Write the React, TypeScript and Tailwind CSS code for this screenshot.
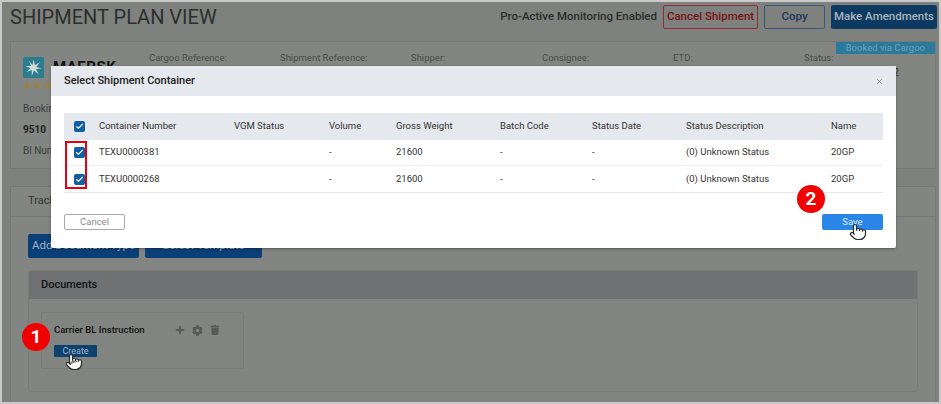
import type { FC } from 'react';
import { FaCog, FaPlus, FaTrash } from 'react-icons/fa';
import { Check, Pointer, X } from 'lucide-react';

const infoColumns = ['Cargoo Reference:', 'Shipment Reference:', 'Shipper:', 'Consignee:', 'ETD:', 'Status:'];

const tableColumns = [
  { label: 'Container Number', width: 'w-[135px]' },
  { label: 'VGM Status', width: 'w-[95px]' },
  { label: 'Volume', width: 'w-[67px]' },
  { label: 'Gross Weight', width: 'w-[104px]' },
  { label: 'Batch Code', width: 'w-[92px]' },
  { label: 'Status Date', width: 'w-[94px]' },
  { label: 'Status Description', width: 'w-[145px]' },
  { label: 'Name', width: 'w-[52px]' },
];

const rows = [
  ['TEXU0000381', '', '-', '21600', '-', '-', '(0) Unknown Status', '20GP'],
  ['TEXU0000268', '', '-', '21600', '-', '-', '(0) Unknown Status', '20GP'],
];

const CheckBox: FC = () => (
  <span className="flex h-[11px] w-[11px] items-center justify-center rounded-[2px] bg-[#0f5ea8]">
    <Check className="h-[9px] w-[9px] text-white" strokeWidth={3} />
  </span>
);

const StepBadge: FC<{ n: number; className: string }> = ({ n, className }) => (
  <div
    className={`absolute flex h-[28px] w-[28px] items-center justify-center rounded-full bg-[#f20000] text-[19px] font-bold text-white ${className}`}
  >
    {n}
  </div>
);

const Hand: FC<{ className: string }> = ({ className }) => (
  <Pointer className={`absolute h-[18px] w-[18px] fill-white text-[#2b2b2b] ${className}`} strokeWidth={1.6} />
);

const MaerskLogo: FC = () => (
  <svg viewBox="0 0 21 21" className="h-[21px] w-[21px] shrink-0">
    <rect width="21" height="21" rx="1.5" fill="#2b7d8e" />
    <polygon
      fill="#d4dcdc"
      points="10.5,2.5 11.9,8.2 16.9,5.3 13.2,9.9 18.8,11.3 13,12.1 15.6,17.3 10.9,13.4 8.8,18.9 8.8,13 3.4,15 7.5,11.2 2.3,9 8.1,9.1 6,3.7 9.6,8.2"
    />
  </svg>
);

export default function App() {
  return (
    <div className="relative h-[404px] w-[941px] overflow-hidden border-x-2 border-y-2 border-[#c9c9c9] bg-[#7f817f] font-['Roboto',sans-serif] text-[#2c2e2e]">
      {/* Page behind the dialog */}
      <div className="flex h-[27px] items-center justify-between pl-[8px] pr-[2px] mt-[1px]">
        <h1 className="text-[20px] leading-none">SHIPMENT PLAN VIEW</h1>
        <div className="flex items-center">
          <span className="mr-[6px] text-[11.5px] font-medium">Pro-Active Monitoring Enabled</span>
          <button className="mr-[6px] h-[24px] w-[95px] rounded-[2px] border border-[#8f2f33] text-[11.5px] font-medium text-[#7c1216]">
            Cancel Shipment
          </button>
          <button className="mr-[6px] h-[24px] w-[61px] rounded-[2px] border border-[#39597a] text-[11.5px] font-medium text-[#1b3a5c]">
            Copy
          </button>
          <button className="h-[24px] w-[106px] rounded-[2px] bg-[#0d3a61] text-[11.5px] font-medium text-[#a9b4bd]">
            Make Amendments
          </button>
        </div>
      </div>

      <div className="relative ml-[8px] mr-[3px] mt-[11px] flex h-[128px] border border-[#777977] bg-[#838583] pl-[12px]">
        <span className="absolute right-0 top-0 rounded-[1px] bg-[#2c7a9b] px-[10px] text-[9.5px] leading-[12px] text-[#6da2ba]">
          Booked via Cargoo
        </span>
        <div className="w-[132px] pt-[15px] text-[10px] text-[#3c3e3e]">
          <div className="flex items-center gap-[9px]">
            <MaerskLogo />
            <span className="text-[15px] font-bold leading-none tracking-[0.5px] text-[#111]">MAERSK</span>
          </div>
          <div className="mt-[1px] text-[11px] leading-[14px] text-[#9a8440]">★★★★★</div>
          <div className="mt-[8px]">Booking</div>
          <div className="mt-[6px] font-bold text-[#222]">9510</div>
          <div className="mt-[6px]">Bl Number</div>
        </div>
        <div className="flex pt-[9px]">
          {infoColumns.map((c) => (
            <div key={c} className="w-[131px] text-[9.5px] text-[#4a4c4c]">
              {c}
            </div>
          ))}
        </div>
        <span className="absolute right-[36px] top-[23px] text-[10px] text-[#3c3e3e]">2</span>
      </div>

      <div className="ml-[8px] mr-[3px] mt-[17px] h-[230px] border border-[#777977] bg-[#838583]">
        <div className="flex h-[30px] items-center border-b border-[#777977] pl-[17px] text-[11px] text-[#333]">Tracking</div>
        <div className="flex gap-[6px] pl-[17px] pt-[17px]">
          <button className="h-[24px] w-[111px] rounded-[2px] bg-[#0b3f77] text-[11.5px] text-[#9fb0c2]">Add Document Type</button>
          <button className="h-[24px] w-[117px] rounded-[2px] bg-[#0b3f77] text-[11.5px] text-[#9fb0c2]">Select Template</button>
        </div>
        <div className="ml-[17px] mr-[17px] mt-[12px] h-[122px] rounded-[3px] border border-[#7a7c7a] bg-[#828482]">
          <div className="flex h-[28px] items-center bg-[#6f7173] pl-[12px] text-[11px] font-medium text-[#111]">Documents</div>
          <div className="ml-[12px] mt-[13px] h-[57px] w-[203px] rounded-[2px] border border-[#7a7c7a] px-[12px] pt-[10px]">
            <div className="flex items-center justify-between pr-[11px]">
              <span className="text-[9.5px] font-medium text-[#111]">Carrier BL Instruction</span>
              <div className="flex items-center gap-[7px] text-[#585a5a]">
                <FaPlus className="h-[10px] w-[10px]" />
                <FaCog className="h-[11px] w-[11px]" />
                <FaTrash className="h-[10px] w-[10px]" />
              </div>
            </div>
            <button className="mt-[8px] block h-[12px] w-[43px] rounded-[1px] bg-[#0e426e] text-[9px] leading-[12px] text-[#9fb4c6]">
              Create
            </button>
          </div>
        </div>
      </div>

      {/* Dialog */}
      <div className="absolute left-[49px] top-[64px] h-[182px] w-[845px] rounded-[2px] bg-white shadow-[0_1px_3px_rgba(0,0,0,0.35)]">
        <div className="flex h-[30px] items-center justify-between bg-[#e5e8ed] pl-[13px] pr-[12px]">
          <span className="text-[11px] font-medium text-[#222]">Select Shipment Container</span>
          <X className="h-[9px] w-[9px] text-[#8a8f94]" strokeWidth={2} />
        </div>

        <div className="mx-[13px] mt-[17px] w-[819px] border-b border-[#e5e8ed]">
          <div className="flex h-[27px] items-center bg-[#e5e8ed] text-[9.5px] text-[#333]">
            <span className="flex w-[35px] justify-center pr-[5px]">
              <CheckBox />
            </span>
            {tableColumns.map((c) => (
              <span key={c.label} className={c.width}>
                {c.label}
              </span>
            ))}
          </div>
          {rows.map((row, i) => (
            <div key={row[0]} className={`flex h-[26px] items-center text-[9.5px] text-[#333] ${i === 0 ? 'border-b border-[#eceef1]' : ''}`}>
              <span className="flex w-[35px] justify-center pr-[5px]">
                <CheckBox />
              </span>
              {row.map((cell, j) => (
                <span key={j} className={tableColumns[j].width}>
                  {cell}
                </span>
              ))}
            </div>
          ))}
        </div>

        <div className="mx-[13px] mt-[21px] flex items-center justify-between">
          <button className="h-[16px] w-[61px] rounded-[2px] border border-[#a9a9a9] text-[9.5px] leading-none text-[#8b8b8b]">Cancel</button>
          <button className="h-[16px] w-[61px] rounded-[2px] bg-[#2a86e6] text-[9.5px] leading-none text-[#d8e9fb]">Save</button>
        </div>

        {/* Red highlight round the row checkboxes */}
        <div className="absolute left-[14px] top-[75px] h-[48px] w-[22px] border-2 border-[#e60012]" />
      </div>

      <StepBadge n={1} className="left-[20px] top-[321px]" />
      <StepBadge n={2} className="left-[795px] top-[183px]" />
      <Hand className="left-[63px] top-[351px]" />
      <Hand className="left-[847px] top-[221px]" />
    </div>
  );
}
